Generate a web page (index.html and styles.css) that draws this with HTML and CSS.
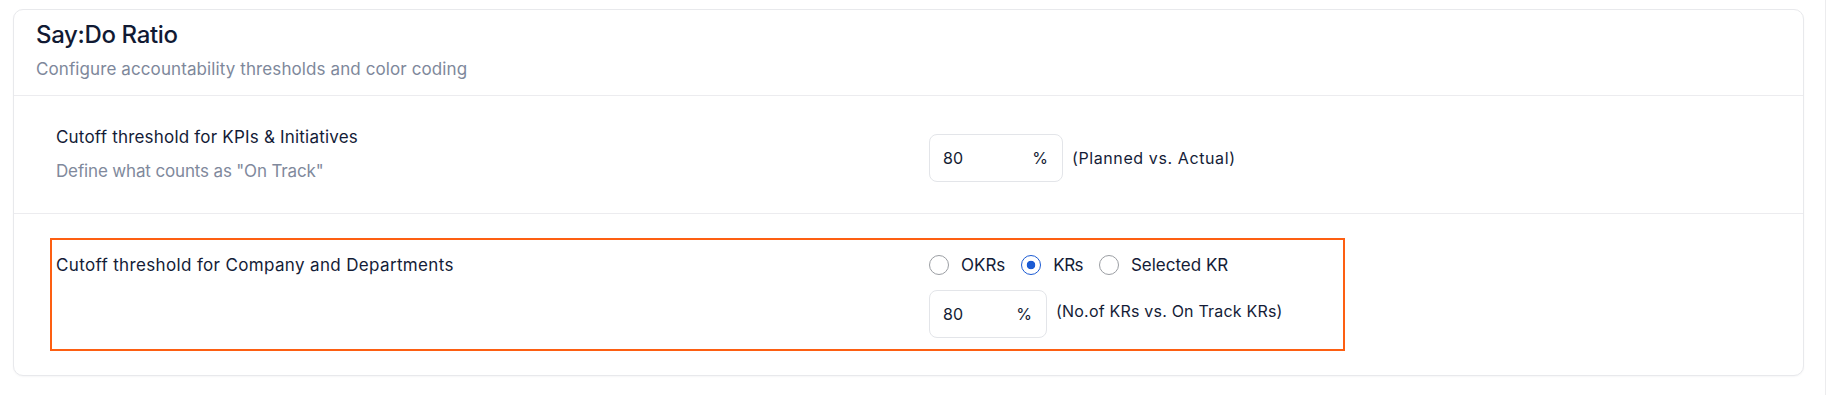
FILE: index.html
```html
<!DOCTYPE html>
<html lang="en">
<head>
<meta charset="utf-8">
<title>Say:Do Ratio</title>
<link rel="stylesheet" href="styles.css">
</head>
<body>
<div class="page">
  <section class="card">
    <header class="card-header">
      <h2 class="card-title">Say:Do Ratio</h2>
      <p class="card-subtitle">Configure accountability thresholds and color coding</p>
    </header>

    <div class="row row-first">
      <div class="setting-grid">
        <div class="setting-info">
          <div class="setting-label">Cutoff threshold for KPIs &amp; Initiatives</div>
          <div class="setting-desc">Define what counts as "On Track"</div>
        </div>
        <div class="setting-control control-offset">
          <div class="pct-input pct-wide"><span>80</span><span>%</span></div>
          <span class="suffix">(Planned vs. Actual)</span>
        </div>
      </div>
    </div>

    <div class="row row-second">
      <div class="highlight">
        <div class="setting-grid">
          <div class="setting-info">
            <div class="setting-label setting-label-long">Cutoff threshold for Company and Departments</div>
          </div>
          <div class="setting-stack">
            <div class="radio-group">
              <label class="radio-item"><input type="radio" name="basis" class="radio"><span>OKRs</span></label>
              <label class="radio-item"><input type="radio" name="basis" class="radio" checked><span class="tight">KRs</span></label>
              <label class="radio-item"><input type="radio" name="basis" class="radio"><span>Selected KR</span></label>
            </div>
            <div class="setting-control control-top">
              <div class="pct-input pct-narrow"><span>80</span><span>%</span></div>
              <span class="suffix suffix-top">(No.of KRs vs. On Track KRs)</span>
            </div>
          </div>
        </div>
      </div>
    </div>
  </section>
</div>
</body>
</html>
```

FILE: styles.css
```css
* { box-sizing: border-box; }

html, body {
  margin: 0;
  padding: 0;
  background: #ffffff;
}

body {
  font-family: Inter, "Noto Sans", "Liberation Sans", sans-serif;
  color: #141c33;
}

.page {
  width: 1826px;
  height: 395px;
  padding: 9px 21px 0 13px;
  border-right: 1px solid #ececee;
}

.card {
  border: 1px solid #e8e9ec;
  border-radius: 10px;
  background: #fff;
  box-shadow: 0 1px 2px rgba(16, 24, 40, 0.04);
}

.card-header {
  padding: 9px 22px 14px;
  border-bottom: 1px solid #ececef;
}

.card-title {
  margin: 0;
  font-size: 24px;
  line-height: 32px;
  font-weight: 500;
  letter-spacing: -0.35px;
  color: #111a33;
}

.card-subtitle {
  margin: 6px 0 0;
  font-size: 17px;
  line-height: 24px;
  letter-spacing: 0.1px;
  color: #7e889b;
}

.row-first {
  padding: 29px 42px 30px;
  border-bottom: 1px solid #ececef;
}

.row-second {
  padding: 24px 36px;
}

.highlight {
  width: 1295px;
  border: 2px solid #fd5f12;
  padding: 13px 4px 11px;
}

.setting-grid {
  display: grid;
  grid-template-columns: 873px 1fr;
  align-items: start;
}

.setting-label {
  font-size: 17px;
  line-height: 24px;
  letter-spacing: 0.2px;
  color: #141c37;
}

.setting-label-long {
  letter-spacing: 0.35px;
}

.setting-desc {
  margin-top: 10px;
  font-size: 17px;
  line-height: 24px;
  letter-spacing: -0.15px;
  color: #80899c;
}

.setting-control {
  display: flex;
  align-items: center;
  gap: 9px;
}

.control-offset {
  margin-top: 9px;
}

.control-top {
  align-items: flex-start;
}

.setting-stack {
  display: flex;
  flex-direction: column;
  gap: 13px;
}

.pct-input {
  height: 48px;
  border: 1px solid #e3e5e9;
  border-radius: 8px;
  display: flex;
  align-items: center;
  justify-content: space-between;
  padding: 0 14px 0 13px;
  font-size: 16px;
  color: #141c33;
  background: #fff;
}

.pct-wide { width: 134px; }
.pct-narrow { width: 118px; }

.suffix {
  font-size: 16px;
  line-height: 22px;
  letter-spacing: 0.6px;
  color: #141c37;
}

.suffix-top {
  margin-top: 10px;
  letter-spacing: 0.2px;
}

.radio-group {
  display: flex;
  align-items: center;
  gap: 16px;
  height: 24px;
}

.radio-item {
  display: flex;
  align-items: center;
  gap: 12px;
  font-size: 17px;
  line-height: 24px;
  letter-spacing: 0;
  color: #141c37;
}

.tight {
  letter-spacing: -0.6px;
}

.radio {
  appearance: none;
  -webkit-appearance: none;
  margin: 0;
  width: 20px;
  height: 20px;
  border-radius: 50%;
  border: 1px solid #9b9ea3;
  background: #fff;
}

.radio:checked {
  border: 1.5px solid #1b5bd3;
  background: radial-gradient(circle, #1b5bd3 0 4px, #fff 4.6px);
}
```
